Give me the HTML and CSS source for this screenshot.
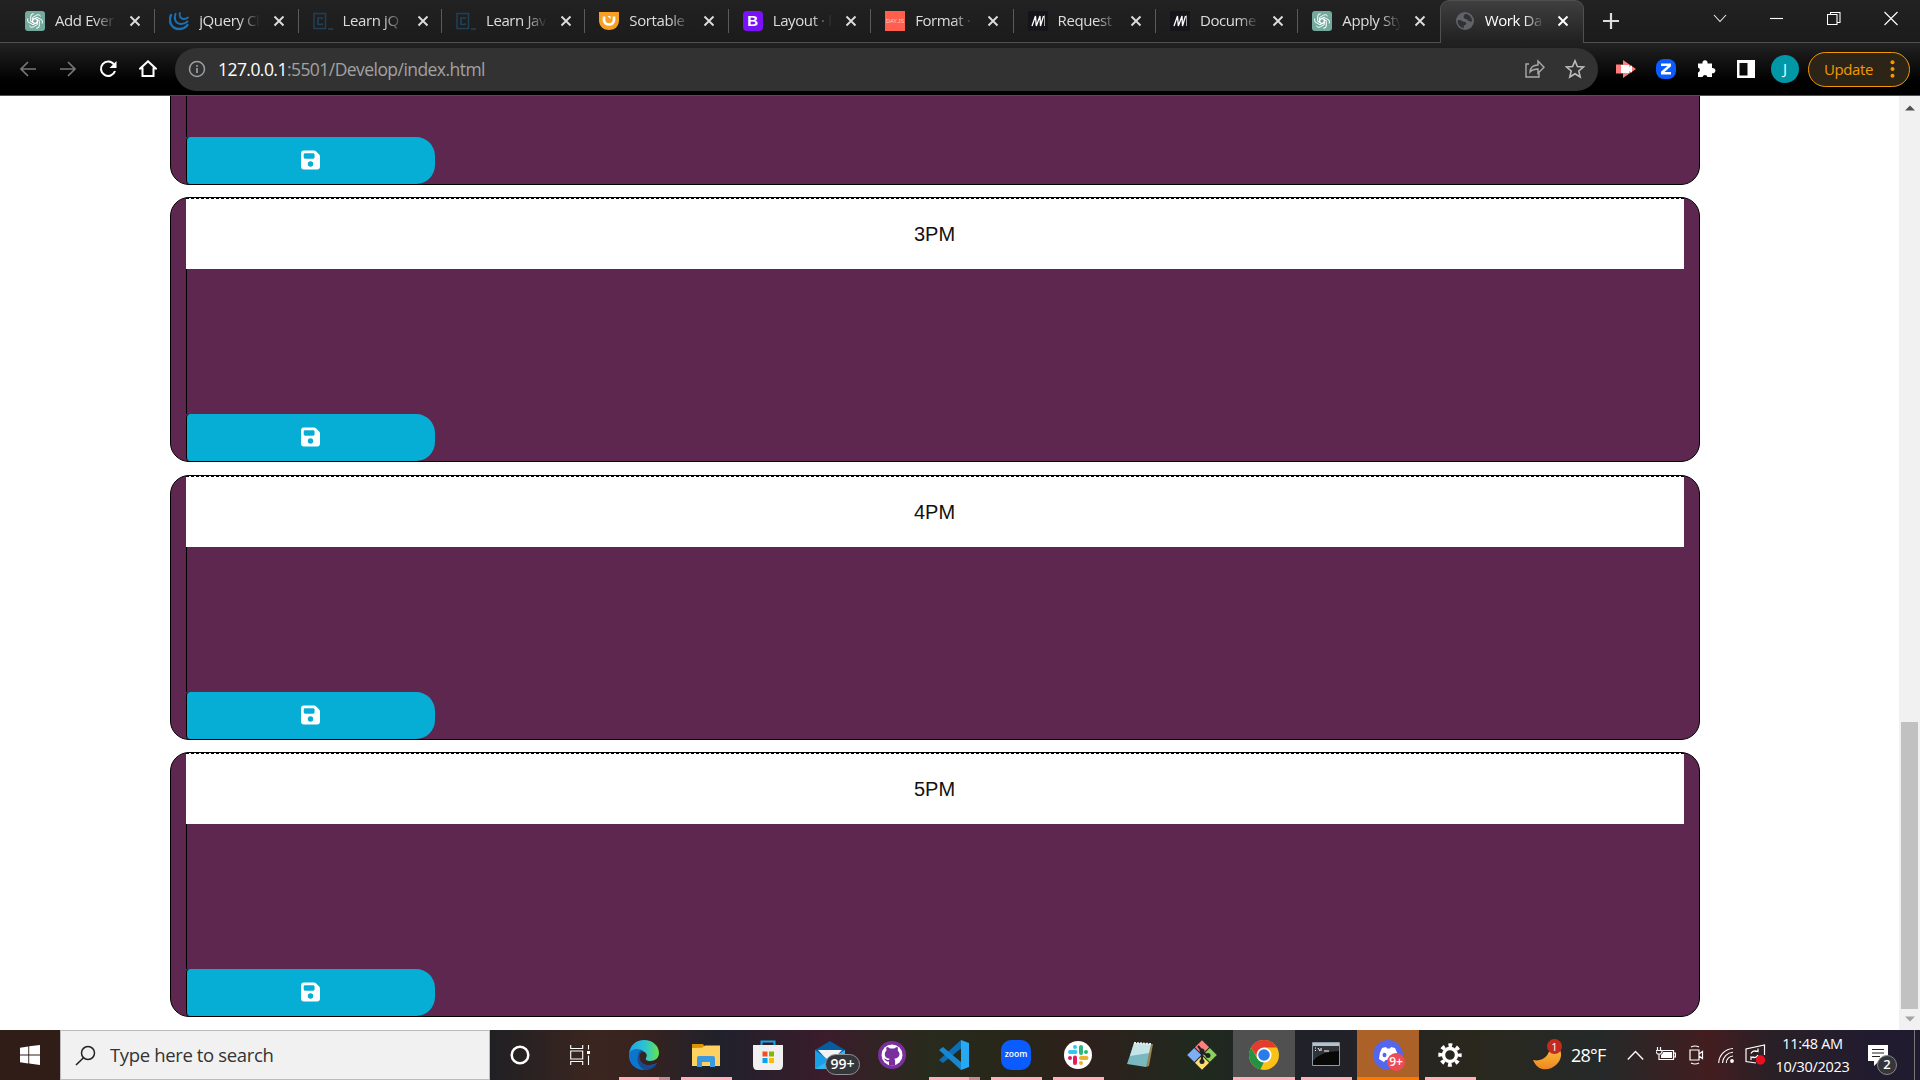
FILE: index.html
```
<!DOCTYPE html>
<html lang="en">
<head>
<meta charset="utf-8">
<title>Work Day Scheduler</title>
<link rel="stylesheet" href="styles.css">
</head>
<body>
<svg class="defs" width="0" height="0" aria-hidden="true">
  <symbol id="x" viewBox="0 0 12 12"><path d="M1.5 1.5l9 9M10.5 1.5l-9 9" stroke="currentColor" stroke-width="1.9" fill="none"/></symbol>
  <symbol id="gpt" viewBox="0 0 20 20"><rect width="20" height="20" rx="3" fill="#74aa9c"/><g fill="none" stroke="#fff" stroke-width="1"><path id="petal" d="M10 7.400l2.300 1.300v4.900l-3.800 2.200a3 3 0 0 1-4.200-1"/><use href="#petal" transform="rotate(60 10 10)"/><use href="#petal" transform="rotate(120 10 10)"/><use href="#petal" transform="rotate(180 10 10)"/><use href="#petal" transform="rotate(240 10 10)"/><use href="#petal" transform="rotate(300 10 10)"/></g></symbol>
  <symbol id="codec" viewBox="0 0 20 20"><g fill="none" stroke="#204056" stroke-width="1.5"><path d="M1 2.500h11.500v15H1zM15 18h5"/><path d="M9 8.300V7H5v6.500h4v-1.300" stroke-width="1.700"/></g></symbol>
  <symbol id="mdn" viewBox="0 0 20 20"><rect width="20" height="20" fill="#15141a"/><path d="M4 15L7.500 5l.8 10L12 5l.5 10L15.500 5" fill="none" stroke="#fff" stroke-width="1.300"/><path d="M16.500 4.500V15" stroke="#ccc" stroke-width=".8"/></symbol>
  <symbol id="save" viewBox="0 0 448 512"><path fill="#fff" d="M64 32C28.700 32 0 60.700 0 96v320c0 35.300 28.700 64 64 64h320c35.300 0 64-28.700 64-64V173.300c0-17-6.700-33.300-18.700-45.300L352 50.700C340 38.700 323.700 32 306.700 32H64zm0 96c0-17.700 14.300-32 32-32h192c17.700 0 32 14.300 32 32v64c0 17.700-14.300 32-32 32H96c-17.700 0-32-14.300-32-32v-64zm160 160a64 64 0 1 1 0 128 64 64 0 1 1 0-128z"/></symbol>
</svg>

<header class="tabs">
  <div class="tab first"><svg class="fav"><use href="#gpt"/></svg><span class="label">Add Ever</span><svg class="close"><use href="#x"/></svg></div>
  <div class="tab wide"><svg class="fav" viewBox="0 0 20 20"><g fill="none" stroke="#1a70b4" stroke-linecap="round"><path d="M2 4c-3 7 1 14 8 14 4 0 7-2 8.500-4" stroke-width="2.300"/><path d="M6.500 3c-2 5 0 9.500 5 10 3 .2 5-.6 7-2.500" stroke-width="2"/><path d="M11 2c-1 3 .5 5.600 3.500 6 2 .1 3-.3 4.500-1.500" stroke-width="1.800"/></g></svg><span class="label">jQuery Cl</span><svg class="close"><use href="#x"/></svg></div>
  <div class="tab wide"><svg class="fav"><use href="#codec"/></svg><span class="label">Learn jQ</span><svg class="close"><use href="#x"/></svg></div>
  <div class="tab wide"><svg class="fav"><use href="#codec"/></svg><span class="label">Learn Jav</span><svg class="close"><use href="#x"/></svg></div>
  <div class="tab wide"><svg class="fav" viewBox="0 0 20 20"><path d="M0 1h20v8c0 7-5 10-10 10S0 16 0 9z" fill="#f9a022"/><path d="M5 5.500V9c0 6 10 6 10 0V5.500" fill="none" stroke="#fff" stroke-width="2.700"/><path d="M8.500 5h3v3z" fill="#fff"/></svg><span class="label">Sortable</span><svg class="close"><use href="#x"/></svg></div>
  <div class="tab"><span class="fav boot">B</span><span class="label">Layout · l</span><svg class="close"><use href="#x"/></svg></div>
  <div class="tab"><span class="fav dayjs">DAY.JS</span><span class="label">Format ·</span><svg class="close"><use href="#x"/></svg></div>
  <div class="tab"><svg class="fav"><use href="#mdn"/></svg><span class="label">Request</span><svg class="close"><use href="#x"/></svg></div>
  <div class="tab"><svg class="fav"><use href="#mdn"/></svg><span class="label">Docume</span><svg class="close"><use href="#x"/></svg></div>
  <div class="tab last"><svg class="fav"><use href="#gpt"/></svg><span class="label">Apply Sty</span><svg class="close"><use href="#x"/></svg></div>
  <div class="tab active"><svg class="fav" viewBox="0 0 20 20"><circle cx="10" cy="10" r="9" fill="#5f6368"/><path d="M2.800 9c4-.5 4.500 1.800 7 2 2.500.3 1.500 3.500-1 3.500v2.700C5 16.500 2 13 2.800 9zM10 3c-1 2-2 2-1 4 1 1.500 3 .5 3.500 2s3 1.500 4.500 1.500C17.500 7 14 2.500 10 3z" fill="#303134"/></svg><span class="label">Work Da</span><svg class="close"><use href="#x"/></svg></div>
  <div class="newtab"><svg width="16" height="16"><path d="M8 0v16M0 8h16" stroke="#ddd" stroke-width="2.200"/></svg></div>
  <div class="wincontrols">
    <svg width="14" height="20"><path d="M1 7l6 6.500L13 7" fill="none" stroke="#eee" stroke-width="1.100"/></svg>
    <svg width="14" height="20"><path d="M0 10.500h13" stroke="#fff" stroke-width="1.100"/></svg>
    <svg width="14" height="20"><path d="M.5 6.500H10v10H.5zM3.500 6V4.500H13v10h-2.500" fill="none" stroke="#fff" stroke-width="1.100"/></svg>
    <svg width="14" height="20"><path d="M.5 4l13 13M13.500 4l-13 13" stroke="#fff" stroke-width="1.100"/></svg>
  </div>
</header>

<nav class="toolbar">
  <div class="navicons">
    <svg width="18" height="18"><path d="M17 9H2M9 2L2 9l7 7" fill="none" stroke="#777" stroke-width="1.700"/></svg>
    <svg width="18" height="18"><path d="M1 9h15M9 2l7 7-7 7" fill="none" stroke="#777" stroke-width="1.700"/></svg>
    <svg width="18" height="18"><path d="M15 4.500A7.200 7.200 0 1 0 16 11" fill="none" stroke="#fff" stroke-width="2.100"/><path d="M17.500 1v7h-7z" fill="#fff"/></svg>
    <svg width="18" height="18"><path d="M3.500 16V8.500H1.300L9 1.300l7.700 7.200h-2.200V16z" fill="none" stroke="#fff" stroke-width="2"/></svg>
  </div>
  <div class="omnibox">
    <svg width="18" height="18"><circle cx="9" cy="9" r="7.500" fill="none" stroke="#9aa0a6" stroke-width="1.500"/><path d="M9 8v5M9 5v1.700" stroke="#9aa0a6" stroke-width="1.700"/></svg>
    <span class="url"><b>127.0.0.1</b>:5501/Develop/index.html</span>
    <svg width="20" height="20"><path d="M4 5H1v13h13v-4M5 13c.5-5 3.500-7 8-7V2l6 6.200-6 6V10c-4 0-6 1-8 3z" fill="none" stroke="#aaa" stroke-width="1.400"/></svg>
    <svg width="20" height="20"><path d="M10 1.800l2.400 5.700 6 .5-4.600 4 1.400 6-5.200-3.200L4.800 18l1.400-6-4.600-4 6-.5z" fill="none" stroke="#bbb" stroke-width="1.600"/></svg>
  </div>
  <div class="extensions">
    <svg width="20" height="20"><path d="M0 5.500h7V1l13 9-13 9v-4.500H0z" fill="#ff7d7d"/><path d="M5 6h8v2l3-1.500v7L13 12v2H5z" fill="#fff"/></svg>
    <svg width="20" height="20"><rect width="20" height="20" rx="8" fill="#0b5cff"/><path d="M5 4.500h10v2.700L8.500 13H15v2.500H5v-2.800L11.500 7H5z" fill="#fff"/></svg>
    <svg width="20" height="20"><path d="M2 4.500h4.500a2.600 2.600 0 1 1 5 0H16V9a2.700 2.700 0 1 1 0 5.200V18h-4.500a2.600 2.600 0 0 0-5 0H2v-4.500a2.600 2.600 0 0 0 0-5z" fill="#fff"/></svg>
    <svg width="20" height="20"><path d="M1 1h18v18H1zM3.500 4v12.500h8V4z" fill="#fff" fill-rule="evenodd"/></svg>
  </div>
  <span class="avatar">J</span>
  <div class="update"><span>Update</span><svg width="5" height="18"><g fill="#f29900"><circle cx="2.500" cy="2.200" r="2"/><circle cx="2.500" cy="9" r="2"/><circle cx="2.500" cy="15.800" r="2"/></g></svg></div>
</nav>

<div class="viewport">
  <main class="page">
    <section class="block"><div class="hour"></div><div class="entry"></div><button class="savebtn"><svg><use href="#save"/></svg></button></section>
    <section class="block wide-gap"><div class="hour">3PM</div><div class="entry"></div><button class="savebtn"><svg><use href="#save"/></svg></button></section>
    <section class="block"><div class="hour">4PM</div><div class="entry"></div><button class="savebtn"><svg><use href="#save"/></svg></button></section>
    <section class="block"><div class="hour">5PM</div><div class="entry"></div><button class="savebtn"><svg><use href="#save"/></svg></button></section>
  </main>
  <aside class="scrollbar">
    <svg width="10" height="6"><path d="M0 5.500L5 .5l5 5z" fill="#505050"/></svg>
    <i class="thumb"></i>
    <svg width="10" height="6"><path d="M0 .5h10l-5 5z" fill="#a3a3a3"/></svg>
  </aside>
</div>

<footer class="taskbar">
  <div class="start"><svg width="20" height="20"><path d="M0 2.700l8.300-1.200v8H0zM9.200 1.300L20 0v9.500H9.200zM0 10.400h8.300v8L0 17.200zM9.200 10.400H20V20l-10.800-1.400z" fill="#fff"/></svg></div>
  <div class="search"><svg width="21" height="21"><circle cx="13" cy="8" r="6.500" fill="none" stroke="#222" stroke-width="1.500"/><path d="M8.500 12.700L1 20" stroke="#222" stroke-width="1.600"/></svg><span>Type here to search</span></div>
  <div class="cell narrow"><svg width="20" height="20"><circle cx="10" cy="10" r="8.300" fill="none" stroke="#fff" stroke-width="2.500"/></svg></div>
  <div class="cell narrow view"><svg width="21" height="20"><path d="M.7 0v3.500h12V0M.7 6h12v8h-12zM.7 20v-3.500h12V20M18.500 0v4.500M18.500 10.500V20" fill="none" stroke="#fff" stroke-width="1.100"/><path d="M17 6h3v3h-3z" fill="#fff"/></svg></div>
  <div class="apps">
    <div class="cell run multi"><svg width="30" height="30" viewBox="0 0 30 30"><defs><linearGradient id="eg" x1="0" x2="1"><stop offset="0" stop-color="#21a3e8"/><stop offset=".55" stop-color="#2dc5d0"/><stop offset="1" stop-color="#67e34a"/></linearGradient></defs><path d="M0 14C1 5 7 0 15 0c9 0 15 6 15 13 0 5-4 8-9 8-3 0-5-1-4-3 2-3 0-7-5-7-5-1-9 1-12 3z" fill="url(#eg)"/><path d="M0 14c2-6 11-6 14-3-4 2-5 7-2 11 3 4 10 4 16 1-3 5-8 7-13 7C5 30-1 22 0 14z" fill="#0c75cc"/><path d="M12 10c-6 6-4 17 4 20 6 0 10-3 12-7-6 3-13 3-16-1-3-4-2-9 2-11z" fill="#174a91"/></svg></div>
    <div class="cell run"><svg width="28" height="24"><path d="M0 1h11l2 3h3v8H0z" fill="#d89400"/><path d="M0 5l10-.2L13 2.500h15V23H0z" fill="#ffd160"/><path d="M5 24v-9q0-2 2-2h14q2 0 2 2v9h-5v-5h-8v5z" fill="#3b99e0"/></svg></div>
    <div class="cell"><svg width="30" height="30"><path d="M8.500 6V1.500h13V6" fill="none" stroke="#18a4e8" stroke-width="2"/><path d="M0 5h30v20q0 5-4 5H4q-4 0-4-5z" fill="#f0f0f0"/><path d="M9.500 11.500h5v5h-5z" fill="#f25022"/><path d="M16 11.500h5v5h-5z" fill="#7fba00"/><path d="M9.500 18h5v5h-5z" fill="#00a4ef"/><path d="M16 18h5v5h-5z" fill="#ffb900"/></svg></div>
    <div class="cell"><svg width="30" height="28"><path d="M0 9l15-9 15 9-2 12H2z" fill="#075b9e"/><path d="M3 9h24L17 20h-4z" fill="#f4f4f4"/><path d="M0 9l15 11 15-11v19H0z" fill="#1a9fe6"/><path d="M0 28L16 18 30 9v19z" fill="#36b4ee"/></svg><span class="count">99+</span></div>
    <div class="cell"><svg width="28" height="28" viewBox="0 0 28 28"><circle cx="14" cy="14" r="14" fill="#7a2f9e"/><circle cx="14" cy="14" r="10.500" fill="#fff"/><path d="M11 24.500v-4c-4 .5-4-3-5.500-3 2-.7 3 2.200 5.500 1.500l.7-1.200C5 17 6.500 11 8.500 9.500c-.5-2 0-3 .2-3.500 2 0 3 1.500 3.500 1.500h4c.5 0 1.500-1.500 3.300-1.500.3.500.7 1.500.2 3.500 2.300 2 3.500 7.300-3.500 8.300 1 .7 1 2 1 6.700z" fill="#7a2f9e"/></svg></div>
    <div class="cell run multi"><svg width="30" height="30"><path d="M22 0v8.500L4 23l-4-3z" fill="#0c6fb5"/><path d="M22 22L4 7l-4 3 22 20z" fill="#1688d1"/><path d="M22 0l8 3v24l-8 3z" fill="#27a8f0"/></svg></div>
    <div class="cell run"><span class="zoomapp">zoom</span></div>
    <div class="cell run"><svg width="28" height="28" viewBox="0 0 28 28"><circle cx="14" cy="14" r="14" fill="#fff"/><g stroke-width="4" stroke-linecap="round"><path d="M11 6v0M6 11h5.500" stroke="#36c5f0"/><path d="M17 6v6M22 11v0" stroke="#2eb67d"/><path d="M17 17h5.500M17 22v0" stroke="#ecb22e"/><path d="M11 16.500V22M6 17v0" stroke="#e01e5a"/></g></svg></div>
    <div class="cell"><svg width="28" height="28"><path d="M8 2l19 1-4 22-3 1z" fill="#9a8252"/><path d="M8 2l17 1-5 23L1 23z" fill="#79b8c1"/><path d="M8 2l17 1-2 9L4 15z" fill="#c5e4e7"/><path d="M8 2l17 1" stroke="#eee" stroke-width="2" stroke-dasharray="2 1"/></svg></div>
    <div class="cell"><svg width="30" height="30"><g transform="rotate(45 15 15)"><path d="M4.500 15.500h10v10h-10z" fill="#7eaef5"/><path d="M4.500 4.500h10v10h-10z" fill="#ff7f7f"/><path d="M15.500 4.500h10v10h-10z" fill="#8cd05e"/><path d="M15.500 15.500h10v10h-10z" fill="#ffdc72"/></g><path d="M11 6l4 5v12M15 12l6 4" stroke="#222" stroke-width="2.200" fill="none"/><circle cx="15" cy="11" r="2.500" fill="#222"/><circle cx="15" cy="21.500" r="2.500" fill="#222"/><circle cx="21" cy="15.500" r="2.500" fill="#222"/></svg></div>
    <div class="cell run current"><svg width="30" height="30" viewBox="0 0 30 30"><circle cx="15" cy="15" r="15" fill="#fbc116"/><path d="M2 7.500A15 15 0 0 1 28 7.500H15L9 18.500z" fill="#e33b2e"/><path d="M2 7.500L8.500 18.700 15 22l-.5 8A15 15 0 0 1 2 7.500z" fill="#229342"/><path d="M15 22l6-3.500-6.500 11.500-3-1z" fill="#fbc116"/><circle cx="15" cy="15" r="7.500" fill="#fff"/><circle cx="15" cy="15" r="5.800" fill="#2a7de9"/></svg></div>
    <div class="cell run term"><svg width="28" height="24"><path d="M.5.500h27v23H.5z" fill="#080808" stroke="#8e9aa5"/><path d="M1 1h26v3H1z" fill="#b5c2cc"/><path d="M1 4h26v5Q9 9 1 19z" fill="#303438"/><path d="M3 6h1M3 8.500h1M6 6l2 3M9 6v3M12 9h5" stroke="#fff"/></svg></div>
    <div class="cell alert"><svg width="30" height="30"><circle cx="15" cy="15" r="15" fill="#5566ee"/><path d="M9 8l4-1 1 1.500h3l1-1.500 4 1q3 5 3 11l-5 3-1.500-2h-6L11 22l-5-3q0-6 3-11z" fill="#fff"/><ellipse cx="11.500" cy="15" rx="2" ry="2.300" fill="#5566ee"/></svg><span class="nine">9+</span></div>
    <div class="cell run"><svg width="24" height="24" viewBox="0 0 24 24"><circle cx="12" cy="12" r="6.500" fill="none" stroke="#fff" stroke-width="3.400"/><circle cx="12" cy="12" r="9.800" fill="none" stroke="#fff" stroke-width="3.800" stroke-dasharray="3.850 3.850" stroke-dashoffset="1.900"/></svg></div>
  </div>
  <div class="tray">
    <div class="weather"><svg width="29" height="29"><defs><linearGradient id="mg" x2="0" y2="1"><stop stop-color="#ffc94a"/><stop offset="1" stop-color="#ef861e"/></linearGradient></defs><path d="M0 19c10 2 17-4 18-17 13 4 12 16 5 22S5 31 0 19z" fill="url(#mg)"/></svg><span class="one">1</span></div>
    <span class="temp">28°F</span>
    <svg class="chev" width="17" height="12"><path d="M.8 10.500l7.700-8 7.700 8" fill="none" stroke="#fff" stroke-width="1.300"/></svg>
    <svg class="batt" width="20" height="16"><path d="M6 3.500h11.500v9H3V9M18 6h1.400v4H18M1.500 0v3M4.500 0v3M3 7v2M0 3.500h6V5L4.500 7h-3L0 5z" fill="none" stroke="#fff" stroke-width="1.200"/><path d="M7 5h9v6H5V8l2-2z" fill="#fff"/></svg>
    <svg class="cam" width="15" height="20"><path d="M1 5h9v10H1zM10 9l3.500-2.500v7L10 11M2 2q4-2 8 0M2 18q4 2 8 0" fill="none" stroke="#fff" stroke-width="1.200"/></svg>
    <svg class="wifi" width="17" height="17"><path d="M.7 16A15 15 0 0 1 15 1.500M4.500 16A11 11 0 0 1 15 5.300M8.300 16A7 7 0 0 1 15 9" fill="none" stroke="#fff" stroke-width="1.100"/><circle cx="14" cy="14" r="1.900" fill="#fff"/></svg>
    <svg class="sync" width="21" height="22"><path d="M11 19L1 17.500V5l18.500-4v10M6 9.500q2-4 7-2V4.500M13 7.500h-3M13 11q-2 4-7 2v3M6 13h3" fill="none" stroke="#fff" stroke-width="1.200"/><circle cx="15.500" cy="16" r="4.700" fill="#e81123"/></svg>
    <div class="clock"><span>11:48 AM</span><span class="date">10/30/2023</span></div>
    <div class="action"><svg width="20" height="21"><path d="M0 0h20v16h-9l-5 5v-5H0z" fill="#fff"/><path d="M4 4.500h12M4 8h12M4 11.500h8" stroke="#222" stroke-width="1.200"/></svg><span class="two">2</span></div>
    <i class="showdesk"></i>
  </div>
</footer>
</body>
</html>
```
FILE: styles.css
```
* { box-sizing: border-box; }
body { margin: 0; width: 1920px; height: 1080px; overflow: hidden; display: flex; flex-direction: column; background: #fff; font-family: "Open Sans", "Noto Sans", sans-serif; }
svg { display: block; flex: none; }
.defs { position: absolute; }

.tabs { height: 43px; flex: none; display: flex; padding-left: 12px; background: linear-gradient(#222, #1b1b1b); border-bottom: 1px solid #505050; }
.tab { position: relative; width: 142.400px; height: 42px; flex: none; display: flex; align-items: center; padding-left: 14px; color: #ddd; }
.tab.first { width: 143.200px; padding-left: 13px; }
.tab.wide { width: 143.400px; }
.tab::after { content: ""; position: absolute; right: 0; top: 9px; width: 1px; height: 24px; background: #5a5a5a; }
.tab.last::after, .tab.active::after { display: none; }
.fav { width: 20px; height: 20px; flex: none; }
.label { width: 59px; flex: none; margin: 0 13px 0 10px; white-space: nowrap; font-size: 15px; letter-spacing: -.4px; line-height: 20px; padding-bottom: 2px; -webkit-mask-image: linear-gradient(90deg, #000 65%, transparent); mask-image: linear-gradient(90deg, #000 65%, transparent); }
.first .label, .wide .label { width: 61px; }
.close { width: 12px; height: 12px; }
.boot { border-radius: 4px; background: #7a12f8; color: #fff; font: bold 15px/20px "Liberation Sans", sans-serif; text-align: center; }
.dayjs { background: #ff5f4c; color: #ffd0c8; font: 5.500px/20px "Liberation Sans", sans-serif; text-align: center; }
.tab.active { height: 43px; width: 144px; margin-left: -1px; border: 1px solid #505050; border-bottom: 0; border-radius: 9px 9px 0 0; background: linear-gradient(#3f3f3f, #202020); color: #fff; padding-bottom: 2px; }
.newtab { width: 32px; display: flex; align-items: center; justify-content: center; margin-left: 11px; }
.wincontrols { margin-left: auto; display: flex; gap: 43px; padding: 8px 22px 0 0; }

.toolbar { height: 53px; flex: none; display: flex; align-items: center; background: linear-gradient(#222, #000 75%); border-bottom: 1px solid #505050; }
.navicons { display: flex; gap: 22px; padding-left: 18.500px; width: 175px; }
.omnibox { width: 1423px; height: 43px; border-radius: 22px; background: #323232; display: flex; align-items: center; padding: 0 13px 0 13px; gap: 20px; }
.url { flex: 1; margin-left: -8px; font-size: 17.500px; letter-spacing: -.55px; color: #a2a2a2; }
.url b { font-weight: 400; color: #fff; }
.extensions { display: flex; gap: 20px; margin-left: 18px; }
.avatar { width: 28px; height: 28px; border-radius: 50%; margin-left: 15px; background: #0097a7; color: #fff; font-size: 15px; line-height: 27px; text-align: center; }
.update { width: 102px; height: 35px; margin-left: 9px; border: 1.500px solid #f29900; border-radius: 18px; background: #2c2416; color: #f29900; display: flex; align-items: center; justify-content: space-between; padding: 0 14px 0 15px; font-size: 15px; letter-spacing: -.4px; }
.update span { padding-bottom: 1px; }

.viewport { height: 934px; flex: none; display: flex; overflow: hidden; }
.page { width: 1899px; flex: none; display: flex; flex-direction: column; justify-content: flex-end; align-items: center; padding: 0 29px 13px 0; }
.block { width: 1530px; height: 265px; flex: none; margin-top: 12px; border: 1px solid #000; border-radius: 19px; background: #5e2750; padding: 0 15px; display: flex; flex-direction: column; }
.wide-gap { margin-bottom: 1px; }
.hour { height: 71px; background: repeating-linear-gradient(90deg, #000 0 3px, #fff 3px 5px) 0 0 / 100% 1px no-repeat #fff; color: #111; text-align: center; font: 20px/70px "Liberation Sans", sans-serif; padding: 1px 1px 0 0; }
.entry { height: 145px; border-left: 1px solid #000; }
.savebtn { width: 249px; height: 47px; border: 0; border-left: 1px solid #000; border-radius: 4px 19px 19px 4px; background: #06aed5; padding: 0 2px 2px 0; display: flex; align-items: center; justify-content: center; }
.savebtn svg { width: 19px; height: 22px; }

.scrollbar { width: 21px; background: #f1f1f1; display: flex; flex-direction: column; align-items: center; padding: 9px 0 8px; }
.thumb { width: 17px; height: 287px; margin: auto 0 7px; background: #c1c1c1; }

.taskbar { height: 50px; flex: none; display: flex; color: #fff; background: linear-gradient(90deg, #301d18 0, #301d18 60px, #202024 490px, #3a251f 590px, #38231f 640px, #20212c 720px, #3b1c2b 825px, #282b1d 930px, #272619 1010px, #2e201c 1080px, #20291e 1200px, #20202a 1320px, #2a281d 1470px, #252929 1600px, #431d20 1710px, #292026 1770px, #211b30 1880px); }
.start { width: 60px; display: flex; align-items: center; justify-content: center; }
.search { width: 430px; border: 1px solid #bbb; background: #f1f1f1; color: #333; display: flex; align-items: center; padding-left: 14px; gap: 14px; font-size: 18.500px; letter-spacing: -.36px; }
.search span { padding-bottom: 1px; }
.cell { position: relative; width: 62px; height: 50px; flex: none; display: flex; align-items: center; justify-content: center; }
.cell.narrow { width: 61.500px; padding-right: 2px; }
.cell.view { padding-right: 4px; }
.cell.term { padding-bottom: 2px; }
.apps { display: flex; }
.run::after { content: ""; position: absolute; left: 6px; right: 5px; bottom: 0; height: 3px; background: #ffb0bb; }
.multi::after { background: linear-gradient(90deg, #ffb0bb 40px, #c98994 40px); }
.current { background: #505050; }
.current::after { left: 0; right: 0; }
.alert { background: #ab6127; border-bottom: 3px solid #ff7900; padding-top: 3px; }
.count { position: absolute; left: 26px; top: 24px; width: 35px; height: 21px; border: 1px solid #929292; border-radius: 11px; background: #34363c; font-size: 14px; font-weight: 600; line-height: 18px; text-align: center; }
.zoomapp { width: 30px; height: 30px; border-radius: 10px; background: #0b5cff; font-size: 8.500px; font-weight: 600; line-height: 27px; text-align: center; }
.nine { position: absolute; left: 30px; top: 23px; width: 18px; height: 18px; border-radius: 50%; background: #eb4d55; font-size: 12px; font-weight: 600; line-height: 17px; text-align: center; }
.tray { flex: 1; display: flex; align-items: center; }
.weather { position: relative; margin-left: 52px; width: 29px; height: 29px; }
.one { position: absolute; left: 14px; top: -2px; width: 15px; height: 15px; border-radius: 50%; background: #c42b1c; font-size: 11px; line-height: 15px; text-align: center; }
.temp { margin-left: 9px; width: 56px; font-size: 18px; letter-spacing: -.8px; }
.batt { margin-left: 12px; }
.cam { margin-left: 13px; }
.wifi { margin-left: 14px; }
.sync { margin-left: 10px; }
.clock { width: 75px; margin-left: 9px; display: flex; flex-direction: column; align-items: center; font-size: 14.500px; line-height: 23px; letter-spacing: -.3px; white-space: nowrap; }
.action { position: relative; margin-left: 18px; width: 20px; height: 21px; }
.two { position: absolute; left: 9px; top: 10px; width: 20px; height: 20px; border: 1px solid #888; border-radius: 50%; background: #34363c; font-size: 13px; font-weight: 600; line-height: 17px; text-align: center; }
.showdesk { margin-left: auto; width: 6px; height: 50px; border-left: 1px solid #777; }
```
